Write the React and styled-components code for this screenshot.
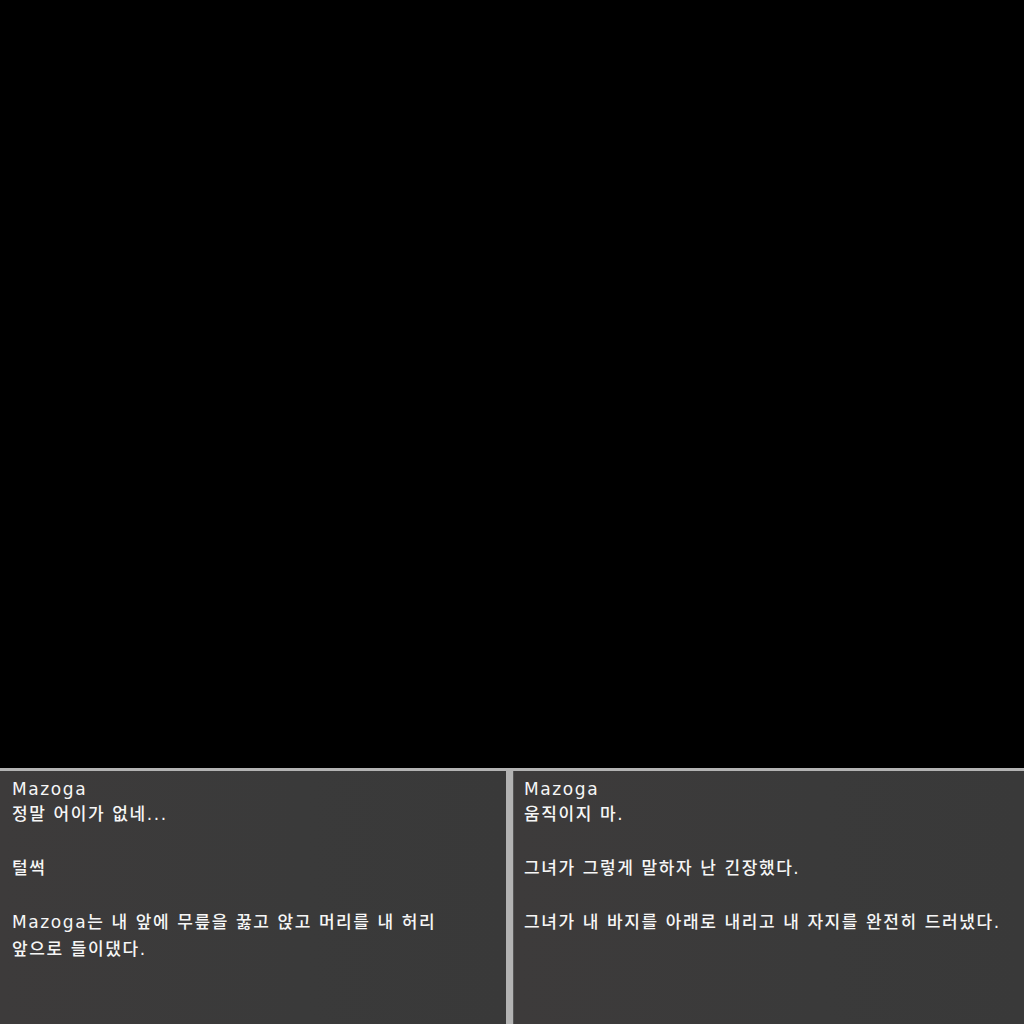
import React from "react";
import styled, { createGlobalStyle } from "styled-components";

const Global = createGlobalStyle`
  html, body { margin: 0; padding: 0; height: 100%; background: #000; }
  #root { height: 100%; }
`;

const Screen = styled.div`
  height: 100vh;
  display: flex;
  flex-direction: column;
  background: #000;
  overflow: hidden;
`;

const Stage = styled.div`
  flex: 1;
  background: #000;
`;

const DialogBar = styled.div`
  height: 253px;
  border-top: 3px solid #b3b3b3;
  display: flex;
  background: #b3b3b3;
`;

const Panel = styled.div`
  flex: ${(p) => (p.$first ? "0 0 506px" : "1")};
  margin-left: ${(p) => (p.$first ? "0" : "7px")};
  border-left: ${(p) => (p.$first ? "none" : "1px solid #555")};
  background: linear-gradient(90deg, #3d3b3b 0%, #3a3a3a 60%, #393939 100%);
  padding: 6px 8px 0 ${(p) => (p.$first ? "12px" : "10px")};
  box-sizing: border-box;
  color: #f6f6f6;
  font-family: "DejaVu Sans", "Noto Sans CJK KR", sans-serif;
  font-size: 17px;
  font-weight: 500;
  letter-spacing: 1.6px;
`;

const Name = styled.div`
  line-height: 24px;
`;

const Body = styled.div`
  line-height: 27px;
  white-space: pre-wrap;
`;

const dialogs = [
  {
    name: "Mazoga",
    text: "정말 어이가 없네...\n\n털썩\n\nMazoga는 내 앞에 무릎을 꿇고 앉고 머리를 내 허리\n앞으로 들이댔다.",
  },
  {
    name: "Mazoga",
    text: "움직이지 마.\n\n그녀가 그렇게 말하자 난 긴장했다.\n\n그녀가 내 바지를 아래로 내리고 내 자지를 완전히 드러냈다.",
  },
];

export default function App() {
  return (
    <>
      <Global />
      <Screen>
        <Stage />
        <DialogBar>
          {dialogs.map((d, i) => (
            <Panel key={i} $first={i === 0}>
              <Name>{d.name}</Name>
              <Body>{d.text}</Body>
            </Panel>
          ))}
        </DialogBar>
      </Screen>
    </>
  );
}
